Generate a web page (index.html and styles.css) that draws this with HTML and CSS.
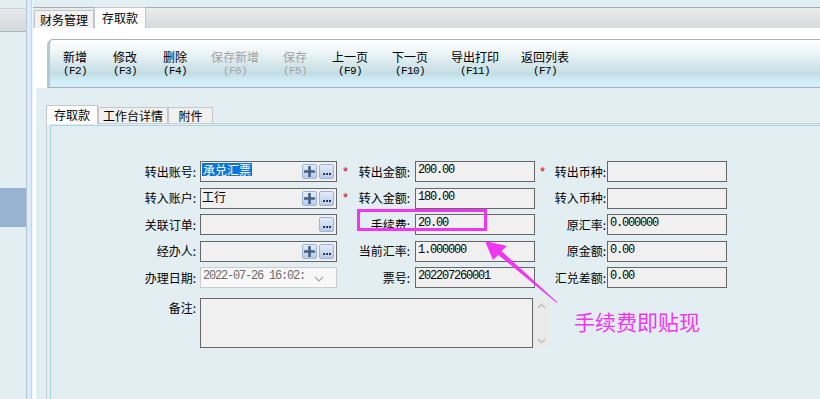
FILE: index.html
```html
<!DOCTYPE html>
<html lang="zh-CN">
<head>
    <meta charset="UTF-8">
    <title>存取款</title>
    <link rel="stylesheet" href="styles.css">
</head>
<body>

<div class="app">
    <aside class="sidebar">
        <div class="sidebar-head"></div>
        <div class="sidebar-item"></div>
    </aside>
    <div class="splitter"></div>

    <main class="main">
        <div class="doc-tabs">
            <div class="doc-tab">财务管理</div>
            <div class="doc-tab active">存取款</div>
        </div>

        <div class="page">
            <div class="toolbar-wrap">
                <div class="toolbar">
                    <div class="tb-btn"><span class="cap">新增</span><span class="key">(F2)</span></div>
                    <div class="tb-btn"><span class="cap">修改</span><span class="key">(F3)</span></div>
                    <div class="tb-btn"><span class="cap">删除</span><span class="key">(F4)</span></div>
                    <div class="tb-btn disabled"><span class="cap">保存新增</span><span class="key">(F6)</span></div>
                    <div class="tb-btn disabled"><span class="cap">保存</span><span class="key">(F5)</span></div>
                    <div class="tb-btn"><span class="cap">上一页</span><span class="key">(F9)</span></div>
                    <div class="tb-btn"><span class="cap">下一页</span><span class="key">(F10)</span></div>
                    <div class="tb-btn"><span class="cap">导出打印</span><span class="key">(F11)</span></div>
                    <div class="tb-btn"><span class="cap">返回列表</span><span class="key">(F7)</span></div>
                </div>
            </div>

            <div class="sub-tabs">
                <div class="sub-tab active">存取款</div>
                <div class="sub-tab">工作台详情</div>
                <div class="sub-tab">附件</div>
            </div>

            <div class="tab-panel">
                <div class="tab-body">
                    <div class="form">
                        <!-- row 1 -->
                        <div class="lbl">转出账号:</div>
                        <div class="field"><span class="sel">承兑汇票</span>
                            <span class="ibtn plus push"><svg width="11" height="11" viewBox="0 0 11 11"><path d="M4.2 0h2.6v11H4.2zM0 4.2h11v2.6H0z" fill="#44607f"/></svg></span>
                            <span class="ibtn dots"><i></i><i></i><i></i></span>
                        </div>
                        <div class="lbl lbl-2"><span class="req">*</span>转出金额:</div>
                        <div class="field"><span class="val">200.00</span></div>
                        <div class="lbl lbl-3"><span class="req">*</span>转出币种:</div>
                        <div class="field"></div>

                        <!-- row 2 -->
                        <div class="lbl">转入账户:</div>
                        <div class="field"><span>工行</span>
                            <span class="ibtn plus push"><svg width="11" height="11" viewBox="0 0 11 11"><path d="M4.2 0h2.6v11H4.2zM0 4.2h11v2.6H0z" fill="#44607f"/></svg></span>
                            <span class="ibtn dots"><i></i><i></i><i></i></span>
                        </div>
                        <div class="lbl lbl-2"><span class="req">*</span>转入金额:</div>
                        <div class="field"><span class="val">180.00</span></div>
                        <div class="lbl lbl-3">转入币种:</div>
                        <div class="field"></div>

                        <!-- row 3 -->
                        <div class="lbl">关联订单:</div>
                        <div class="field">
                            <span class="ibtn dots push"><i></i><i></i><i></i></span>
                        </div>
                        <div class="lbl lbl-2">手续费:</div>
                        <div class="field"><span class="val">20.00</span></div>
                        <div class="lbl lbl-3">原汇率:</div>
                        <div class="field"><span class="val">0.000000</span></div>

                        <!-- row 4 -->
                        <div class="lbl">经办人:</div>
                        <div class="field">
                            <span class="ibtn plus push"><svg width="11" height="11" viewBox="0 0 11 11"><path d="M4.2 0h2.6v11H4.2zM0 4.2h11v2.6H0z" fill="#44607f"/></svg></span>
                            <span class="ibtn dots"><i></i><i></i><i></i></span>
                        </div>
                        <div class="lbl lbl-2">当前汇率:</div>
                        <div class="field"><span class="val">1.000000</span></div>
                        <div class="lbl lbl-3">原金额:</div>
                        <div class="field"><span class="val">0.00</span></div>

                        <!-- row 5 -->
                        <div class="lbl">办理日期:</div>
                        <div class="field date"><span class="val">2022-07-26 16:02:</span>
                            <svg class="chev" width="10" height="6" viewBox="0 0 10 6"><path d="M1 1l4 4 4-4" fill="none" stroke="#a8a8a8" stroke-width="1.2"/></svg>
                        </div>
                        <div class="lbl lbl-2">票号:</div>
                        <div class="field"><span class="val">202207260001</span></div>
                        <div class="lbl lbl-3">汇兑差额:</div>
                        <div class="field"><span class="val">0.00</span></div>

                        <!-- remark -->
                        <div class="lbl lbl-top">备注:</div>
                        <div class="remark">
                            <div class="remark-box"></div>
                            <div class="scroll">
                                <svg width="9" height="6" viewBox="0 0 9 6"><path d="M1 5l3.5-3.5L8 5" fill="none" stroke="#c2c2c2" stroke-width="1.6"/></svg>
                                <svg width="9" height="6" viewBox="0 0 9 6"><path d="M1 1l3.5 3.5L8 1" fill="none" stroke="#c2c2c2" stroke-width="1.6"/></svg>
                            </div>
                        </div>
                    </div>
                </div>
            </div>
        </div>
    </main>
</div>

<!-- annotation layer -->
<div class="note-box"></div>
<svg class="note-arrow" width="820" height="399" viewBox="0 0 820 399">
    <polygon points="485,241 507,246 501.6,251.1 557.5,302.5 556.8,303 498.4,254.9 493,260" fill="#f036f0"/>
</svg>
<div class="note-text">手续费即贴现</div>

</body>
</html>
```

FILE: styles.css
```css
* {
    box-sizing: border-box;
}

html, body {
    margin: 0;
    padding: 0;
}

body {
    width: 820px;
    height: 399px;
    overflow: hidden;
    position: relative;
    font-family: "Noto Sans CJK SC", sans-serif;
    font-size: 12px;
    color: #000;
    background: #e3eef3;
}

.app {
    display: flex;
    height: 100%;
}

/* left navigation strip */
.sidebar {
    width: 27px;
    border-right: 1px solid #b6c6d6;
    background: #e3eef3;
}

.sidebar-head {
    margin-top: 8px;
    height: 24px;
    border-top: 1px solid #cdd4d8;
    border-bottom: 1px solid #aab4ba;
    background: linear-gradient(#e6e8ea, #d5d9dc);
}

.sidebar-item {
    margin-top: 156px;
    height: 39px;
    background: #98b2d2;
}

.splitter {
    width: 6px;
    background: linear-gradient(to right, #dceaf8 0, #dceaf8 4px, #c4d8ec 4px, #c4d8ec 5px, #eaf2fa 5px);
}

.main {
    flex: 1;
    min-width: 0;
    display: flex;
    flex-direction: column;
}

/* document tabs */
.doc-tabs {
    margin-top: 7px;
    height: 21px;
    border-top: 1px solid #a2aeae;
    background: linear-gradient(#ebebeb, #d6d9dc);
    display: flex;
    align-items: flex-end;
    padding-left: 1px;
}

.doc-tab {
    height: 18px;
    padding: 0 5px;
    border: 1px solid #c2c6c8;
    border-bottom: none;
    background: #f2f2f2;
    line-height: 17px;
}

.doc-tab.active {
    height: 21px;
    padding: 0 7px;
    background: #fff;
    line-height: 19px;
}

.page {
    flex: 1;
    display: flex;
    flex-direction: column;
    border-left: 3px solid #fff;
    background: #e3eef3;
}

/* toolbar */
.toolbar-wrap {
    background: #fff;
    padding: 11px 0 0 11px;
}

.toolbar {
    height: 49px;
    display: grid;
    grid-template-columns: 50px 50px 48px 72px 49px 60px 59px 70px 1fr;
    align-items: center;
    justify-items: start;
    padding: 0 0 2px 13px;
    border-top: 1px solid #a6b2b6;
    border-bottom: 1px solid #a6b2b6;
    border-left: 3px solid #b4c8ce;
    border-top-left-radius: 6px;
    background: linear-gradient(#ffffff 0%, #eef5f7 25%, #d2e5ea 55%, #c3dde4 72%, #d0edf7 86%, #d4f1fb 100%);
}

.tb-btn {
    display: flex;
    flex-direction: column;
    align-items: center;
    color: #000;
}

.tb-btn .cap {
    line-height: 17px;
}

.tb-btn .key {
    font-family: "Liberation Mono", monospace;
    font-size: 11px;
    letter-spacing: -0.6px;
    line-height: 12px;
}

.tb-btn.disabled {
    color: #a2a2a2;
}

/* inner tabs */
.sub-tabs {
    display: flex;
    align-items: flex-end;
    height: 18px;
    margin: 17px 0 0 10px;
    position: relative;
    z-index: 1;
}

.sub-tab {
    height: 16px;
    min-width: 45px;
    padding: 0 4px;
    border: 1px solid #c6c6c6;
    border-bottom: none;
    background: #f0f0f0;
    text-align: center;
    line-height: 15px;
}

.sub-tab.active {
    height: 19px;
    margin-bottom: -1px;
    padding: 0 7px;
    background: #fff;
    line-height: 17px;
}

.tab-panel {
    flex: 1;
    display: flex;
    flex-direction: column;
    margin-left: 10px;
    padding: 1px 0 0 3px;
    border-top: 1px solid #c8cfd2;
    border-left: 1px solid #c8cfd2;
}

.tab-body {
    flex: 1;
    border-top: 1px solid #a9d5e1;
    border-left: 1px solid #a9d5e1;
}

/* form grid */
.form {
    display: grid;
    grid-template-columns: 70px 137px 78px 120px 72px 120px;
    grid-template-rows: repeat(5, 21px) 54.5px;
    row-gap: 5.5px;
    margin: 35px 0 0 79px;
}

.lbl {
    display: flex;
    align-items: center;
    justify-content: flex-end;
    padding-right: 4px;
    white-space: nowrap;
    line-height: 14px;
}

.lbl-2 {
    padding-right: 5px;
}

.lbl-3 {
    padding-right: 1px;
}

.lbl-top {
    align-items: flex-start;
    padding-top: 7px;
}

.req {
    margin-left: 6px;
    margin-right: auto;
    color: #e00000;
    font-family: "Liberation Sans", sans-serif;
    font-size: 13px;
}

.lbl-3 .req {
    margin-left: 5px;
}

.field {
    display: flex;
    align-items: flex-start;
    gap: 2px;
    padding: 1px 2px 0 1px;
    border: 1px solid #676767;
    background: #f0f0f0;
    line-height: 14px;
}

.val {
    font-family: "Liberation Mono", monospace;
    font-size: 12px;
    letter-spacing: -1.2px;
    line-height: 14px;
    margin-left: 1px;
}

.sel {
    background: #0a74d8;
    color: #fff;
    padding: 0 1px;
    line-height: 13px;
}

.ibtn {
    width: 15px;
    height: 15px;
    margin-top: 1px;
    border: 1px solid #9cb2d6;
    border-radius: 2px;
    background: linear-gradient(#e4ecfa, #b8cbeb);
    display: flex;
    align-items: center;
    justify-content: center;
}

.ibtn.push {
    margin-left: auto;
}

.dots {
    align-items: flex-end;
    gap: 1px;
    padding-bottom: 3px;
}

.dots i {
    width: 2px;
    height: 2px;
    background: #2e3a52;
}

.field.date {
    border-color: #cbcbcb;
    background: #f7f7f7;
    color: #6c6c6c;
}

.chev {
    margin: 7px 10px 0 auto;
}

.remark {
    grid-column: 2 / 5;
    justify-self: start;
    width: 350px;
    height: 50px;
    margin-top: 4.5px;
    display: flex;
}

.remark-box {
    width: 333px;
    border: 1px solid #676767;
    background: #f0f0f0;
}

.scroll {
    width: 17px;
    background: #eaeaea;
    display: flex;
    flex-direction: column;
    justify-content: space-between;
    align-items: center;
    padding: 5px 0 4px;
}

/* annotation layer */
.note-box {
    position: absolute;
    left: 357px;
    top: 209px;
    width: 130px;
    height: 22px;
    border: 3px solid #f036f0;
}

.note-arrow {
    position: absolute;
    left: 0;
    top: 0;
    pointer-events: none;
}

.note-text {
    position: absolute;
    left: 574px;
    top: 311px;
    font-size: 21px;
    line-height: 21px;
    color: #f036f0;
}
```
